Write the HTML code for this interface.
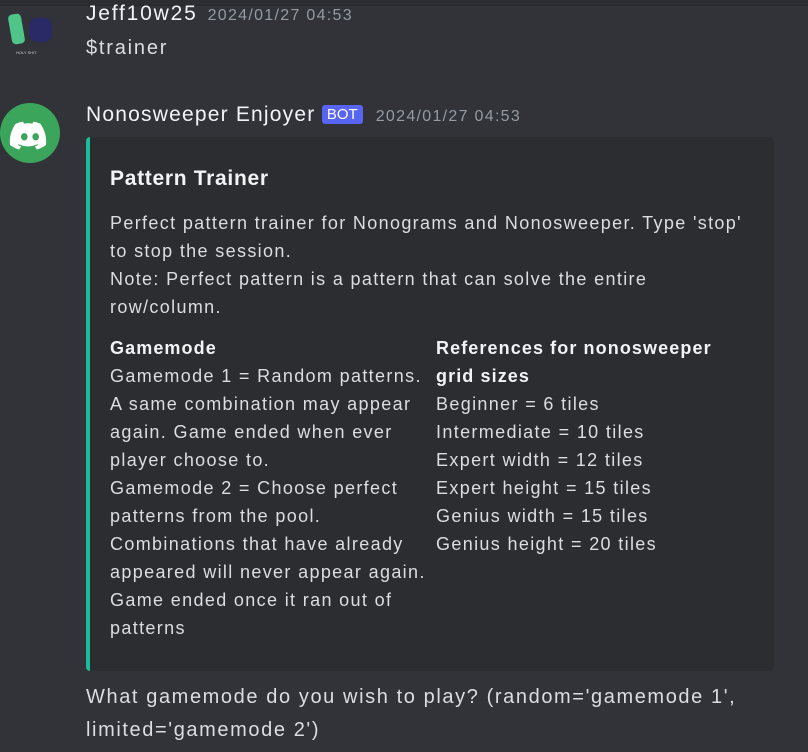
<!DOCTYPE html>
<html><head><style>
body{margin:0;width:808px;height:752px;background:#313338;font-family:"Liberation Sans",sans-serif;color:#dbdee1;position:relative;overflow:hidden}
.a{position:absolute;white-space:nowrap}
.name{font-size:21px;color:#f2f3f5;letter-spacing:1.2px}
.ts{font-size:16px;color:#949ba4;letter-spacing:1.3px}
.embed{left:86px;top:137px;width:684px;height:534px;background:#2b2d31;border-left:4px solid #1abc9c;border-radius:4px}
.t{font-size:18px;line-height:28px;color:#dbdee1;letter-spacing:1.35px}
b{color:#f2f3f5;letter-spacing:1.1px}
</style></head><body>
<div class="a" style="left:0;top:0;width:808px;height:5px;background:#2b2d31;border-bottom:1px solid #26282c"></div>
<div class="a" style="left:10px;top:14px;width:13px;height:30px;background:#4fc58a;border-radius:4px;transform:rotate(-10deg)"></div>
<div class="a" style="left:29px;top:18px;width:23px;height:24px;background:#2a2a66;border-radius:8px"></div>
<div class="a" style="left:16px;top:50px;font-size:4px;color:#ccc">HOLY SHIT</div>
<div class="a" style="left:86px;top:2px"><span class="name" style="letter-spacing:1.8px">Jeff10w25</span><span class="ts" style="margin-left:10px">2024/01/27 04:53</span></div>
<div class="a" style="left:86px;top:37px;font-size:20px;color:#dbdee1;letter-spacing:1.8px">$trainer</div>
<div class="a" style="left:0;top:103px;width:60px;height:60px;border-radius:50%;background:#3ba55c">
<svg width="60" height="60" viewBox="0 0 60 60"><path fill="#fff" d="M41 21c-2.5-1.2-5-2-7.6-2.4l-1 2c-2.8-.4-5.6-.4-8.4 0l-1-2c-2.6.4-5.2 1.2-7.6 2.4-4.8 7.200-6.100 14.200-5.400 21 3 2.300 6 3.600 9.200 4.500l1.900-3.100c-1.100-.400-2.100-.900-3.100-1.500l.800-.600c6 2.800 12.500 2.800 18.400 0l.800.600c-1 .600-2 1.100-3.100 1.500l1.900 3.100c3.200-.900 6.200-2.200 9.200-4.500.8-7.900-1.300-14.900-5.400-21zM24.300 37.500c-1.800 0-3.300-1.700-3.300-3.700s1.400-3.700 3.300-3.700 3.300 1.700 3.300 3.700-1.400 3.700-3.300 3.700zm11.400 0c-1.800 0-3.300-1.700-3.300-3.700s1.400-3.700 3.300-3.700 3.300 1.700 3.300 3.700-1.400 3.700-3.300 3.700z"/></svg></div>
<div class="a" style="left:86px;top:103px"><span class="name">Nonosweeper Enjoyer</span> <span style="background:#5865f2;color:#fff;font-size:15px;padding:1px 5px;border-radius:3px;position:relative;top:-2px;margin-left:2px">BOT</span><span class="ts" style="margin-left:13px">2024/01/27 04:53</span></div>
<div class="a embed"></div>
<div class="a" style="left:110px;top:167px;font-size:21px;font-weight:bold;color:#f2f3f5;letter-spacing:0.7px">Pattern Trainer</div>
<div class="a t" style="left:110px;top:209px">Perfect pattern trainer for Nonograms and Nonosweeper. Type 'stop'<br>to stop the session.<br>Note: Perfect pattern is a pattern that can solve the entire<br>row/column.</div>
<div class="a t" style="left:110px;top:334px"><b>Gamemode</b><br>Gamemode 1 = Random patterns.<br>A same combination may appear<br>again. Game ended when ever<br>player choose to.<br>Gamemode 2 = Choose perfect<br>patterns from the pool.<br>Combinations that have already<br>appeared will never appear again.<br>Game ended once it ran out of<br>patterns</div>
<div class="a t" style="left:436px;top:334px"><b>References for nonosweeper<br>grid sizes</b><br>Beginner = 6 tiles<br>Intermediate = 10 tiles<br>Expert width = 12 tiles<br>Expert height = 15 tiles<br>Genius width = 15 tiles<br>Genius height = 20 tiles</div>
<div class="a" style="left:86px;top:681px;font-size:20px;line-height:33px;letter-spacing:1.6px">What gamemode do you wish to play? (random='gamemode 1',<br>limited='gamemode 2')</div>
</body></html>
